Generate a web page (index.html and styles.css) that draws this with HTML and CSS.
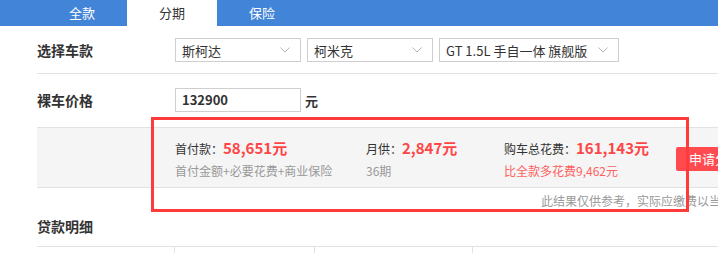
FILE: index.html
```html
<!DOCTYPE html>
<html lang="zh">
<head>
<meta charset="utf-8">
<link rel="stylesheet" href="styles.css">
</head>
<body>
<div class="tabs">
  <div class="tab">全款</div>
  <div class="tab active">分期</div>
  <div class="tab">保险</div>
</div>
<div class="page">
  <div class="row row-model">
    <div class="label">选择车款</div>
    <div class="selects">
      <div class="select s1"><span>斯柯达</span><svg class="chev" viewBox="0 0 10 6" width="10" height="6"><path d="M0.5 0.5 L5 5 L9.5 0.5" fill="none" stroke="#b5b5b5" stroke-width="1"/></svg></div>
      <div class="select s2"><span>柯米克</span><svg class="chev" viewBox="0 0 10 6" width="10" height="6"><path d="M0.5 0.5 L5 5 L9.5 0.5" fill="none" stroke="#b5b5b5" stroke-width="1"/></svg></div>
      <div class="select s3"><span>GT 1.5L 手自一体 旗舰版</span><svg class="chev" viewBox="0 0 10 6" width="10" height="6"><path d="M0.5 0.5 L5 5 L9.5 0.5" fill="none" stroke="#b5b5b5" stroke-width="1"/></svg></div>
    </div>
  </div>
  <div class="row row-price">
    <div class="label">裸车价格</div>
    <div class="price">
      <div class="input">132900</div>
      <span class="unit">元</span>
    </div>
  </div>
  <div class="summary">
    <div class="col c1">
      <div class="main">首付款：<b>58,651元</b></div>
      <div class="sub">首付金额+必要花费+商业保险</div>
    </div>
    <div class="col c2">
      <div class="main">月供：<b>2,847元</b></div>
      <div class="sub">36期</div>
    </div>
    <div class="col c3">
      <div class="main">购车总花费：<b>161,143元</b></div>
      <div class="sub red">比全款多花费9,462元</div>
    </div>
    <div class="apply">申请分期</div>
  </div>
  <div class="note">此结果仅供参考，实际应缴费以当地为准</div>
  <div class="loan-title">贷款明细</div>
  <div class="table">
    <div class="cell w1"></div>
    <div class="cell w2"></div>
    <div class="cell w3"></div>
    <div class="cell w4"></div>
  </div>
</div>
<div class="highlight"></div>
</body>
</html>
```

FILE: styles.css
```css
html, body {
  margin: 0;
  padding: 0;
  background: #fff;
  overflow: hidden;
}
body {
  width: 718px;
  height: 253px;
  position: relative;
  font-family: "Microsoft YaHei", "Noto Sans CJK SC", "Liberation Sans", sans-serif;
  color: #333;
}
.tabs {
  display: flex;
  height: 26px;
  background: #4285d8;
  padding-left: 37px;
}
.tab {
  width: 90px;
  line-height: 26px;
  text-align: center;
  font-size: 13px;
  color: #fff;
}
.tab.active {
  background: #fff;
  color: #333;
}
.page {
  padding-left: 37px;
  width: 800px;
}
.row {
  display: flex;
  align-items: center;
}
.label {
  width: 138px;
  font-size: 14px;
  font-weight: bold;
  color: #333;
}
.row-model {
  height: 46px;
  border-bottom: 1px solid #e2e2e2;
  padding-top: 1px;
}
.selects {
  display: flex;
  gap: 6px;
}
.select {
  box-sizing: border-box;
  height: 24px;
  border: 1px solid #cfcfcf;
  display: flex;
  align-items: center;
  justify-content: space-between;
  padding: 0 10px 0 6px;
  font-size: 13px;
  color: #333;
  background: #fff;
}
.s1 { width: 126px; }
.s2 { width: 126px; }
.s3 { width: 180px; }
.chev { flex: none; }
.row-price {
  height: 53px;
  align-items: flex-start;
  padding-top: 14px;
  box-sizing: border-box;
}
.row-price .label { line-height: 24px; }
.price {
  display: flex;
  align-items: center;
  gap: 4px;
}
.input {
  box-sizing: border-box;
  width: 126px;
  height: 24px;
  border: 1px solid #cfcfcf;
  padding-left: 6px;
  line-height: 22px;
  font-size: 13px;
  font-weight: bold;
  color: #333;
}
.unit {
  font-size: 13px;
  font-weight: bold;
}
.summary {
  box-sizing: border-box;
  height: 61px;
  background: #f5f5f5;
  border-top: 1px solid #e2e2e2;
  border-bottom: 1px solid #e2e2e2;
  display: flex;
  align-items: flex-start;
  padding-left: 138px;
  padding-top: 9px;
}
.col .main {
  font-size: 12px;
  color: #333;
  line-height: 22px;
}
.col .main b {
  font-size: 15px;
  color: #ff4545;
}
.col .sub {
  font-size: 12px;
  color: #999;
  line-height: 18px;
  margin-top: 2px;
}
.col .sub.red { color: #ff5f5f; }
.c1 { width: 191px; }
.c2 { width: 138px; }
.c3 { width: 172px; }
.apply {
  margin-top: 10px;
  width: 90px;
  height: 24px;
  line-height: 24px;
  background: #ff4a4f;
  color: #fff;
  font-size: 13px;
  padding-left: 13px;
  border-radius: 2px;
  white-space: nowrap;
}
.note {
  font-size: 12px;
  color: #999;
  padding-left: 504px;
  margin-top: 5px;
  line-height: 16px;
  white-space: nowrap;
}
.loan-title {
  font-size: 14px;
  font-weight: bold;
  color: #333;
  margin-top: 7px;
  line-height: 20px;
}
.table {
  display: flex;
  margin-top: 10px;
  border-top: 1px solid #e2e2e2;
  height: 10px;
}
.cell { height: 10px; border-right: 1px solid #e2e2e2; }
.w1 { width: 137px; }
.w2 { width: 139px; }
.w3 { width: 157px; }
.w4 { width: 200px; border-right: none; }
.highlight {
  position: absolute;
  left: 151px;
  top: 117px;
  width: 532px;
  height: 89px;
  border: 3px solid #ff3a3a;
}
```
